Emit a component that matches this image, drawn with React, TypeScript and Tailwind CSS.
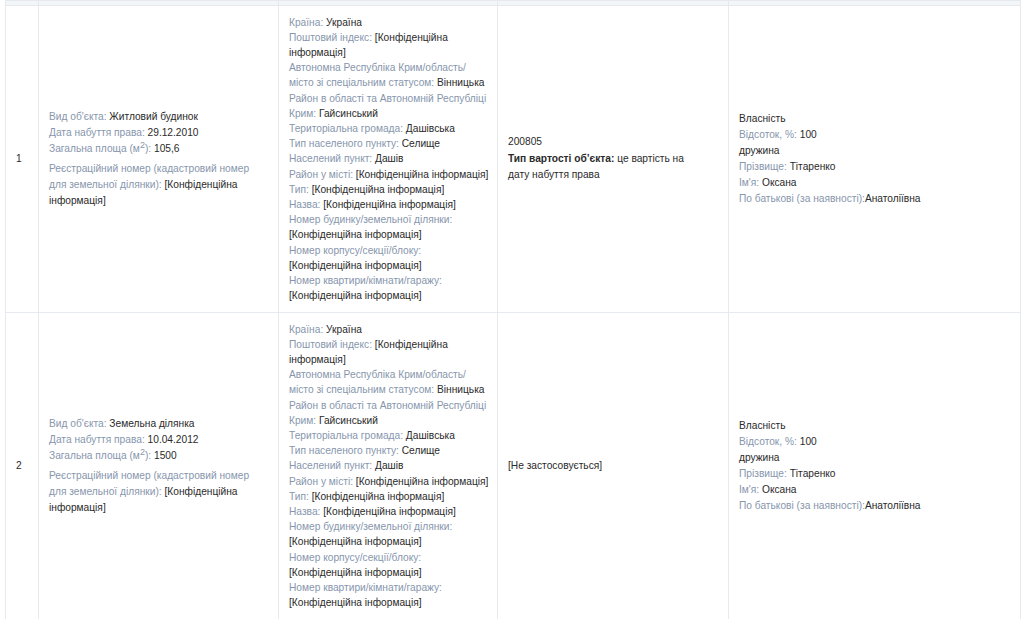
import React from "react";

const L = ({ children }: { children: React.ReactNode }) => (
  <span className="text-[#8796ad]">{children}</span>
);
const V = ({ children }: { children: React.ReactNode }) => (
  <span className="text-[#2a2a2a]">{children}</span>
);

const CONF = "[Конфіденційна інформація]";

function ObjCell({ kind, date, area }: { kind: string; date: string; area: string }) {
  return (
    <div>
      <div className="leading-[16px]">
        <div>
          <L>Вид об'єкта: </L>
          <V>{kind}</V>
        </div>
        <div>
          <L>Дата набуття права: </L>
          <V>{date}</V>
        </div>
        <div>
          <L>
            Загальна площа (м<sup className="text-[9px] leading-none relative -top-[4px] align-baseline">2</sup>):{" "}
          </L>
          <V>{area}</V>
        </div>
      </div>
      <div className="leading-[16px] mt-[4px]">
        <L>Реєстраційний номер (кадастровий номер</L>
        <br />
        <L>для земельної ділянки): </L>
        <V>[Конфіденційна</V>
        <br />
        <V>інформація]</V>
      </div>
    </div>
  );
}

function AddrCell() {
  const lines: React.ReactNode[] = [
    <><L>Країна: </L><V>Україна</V></>,
    <><L>Поштовий індекс: </L><V>[Конфіденційна</V></>,
    <V>інформація]</V>,
    <L>Автономна Республіка Крим/область/</L>,
    <><L>місто зі спеціальним статусом: </L><V>Вінницька</V></>,
    <L>Район в області та Автономній Республіці</L>,
    <><L>Крим: </L><V>Гайсинський</V></>,
    <><L>Територіальна громада: </L><V>Дашівська</V></>,
    <><L>Тип населеного пункту: </L><V>Селище</V></>,
    <><L>Населений пункт: </L><V>Дашів</V></>,
    <><L>Район у місті: </L><V>{CONF}</V></>,
    <><L>Тип: </L><V>{CONF}</V></>,
    <><L>Назва: </L><V>{CONF}</V></>,
    <L>Номер будинку/земельної ділянки:</L>,
    <V>{CONF}</V>,
    <L>Номер корпусу/секції/блоку:</L>,
    <V>{CONF}</V>,
    <L>Номер квартири/кімнати/гаражу:</L>,
    <V>{CONF}</V>,
  ];
  return (
    <div className="leading-[15.2px]">
      {lines.map((l, i) => (
        <div key={i} className="whitespace-nowrap">{l}</div>
      ))}
    </div>
  );
}

function OwnerCell() {
  return (
    <div className="leading-[16px]">
      <div><V>Власність</V></div>
      <div><L>Відсоток, %: </L><V>100</V></div>
      <div><V>дружина</V></div>
      <div><L>Прізвище: </L><V>Тітаренко</V></div>
      <div><L>Ім'я: </L><V>Оксана</V></div>
      <div><L>По батькові (за наявності):</L><V>Анатоліївна</V></div>
    </div>
  );
}

const td = "border border-[#e6eaef] px-[10px] py-[8px] align-middle";

export default function App() {
  return (
    <div
      className="w-[1024px] h-[619px] overflow-hidden bg-white text-[10.2px]"
      style={{ fontFamily: '"Liberation Sans", Arial, sans-serif' }}
    >
      <table className="ml-[5px] w-[1016px] border-collapse table-fixed">
        <colgroup>
          <col className="w-[33px]" />
          <col className="w-[240px]" />
          <col className="w-[219px]" />
          <col className="w-[231px]" />
          <col />
        </colgroup>
        <tbody>
          <tr className="h-[5px] bg-[#f3f6f9]">
            <td className="border border-[#e6eaef] p-0"></td>
            <td className="border border-[#e6eaef] p-0"></td>
            <td className="border border-[#e6eaef] p-0"></td>
            <td className="border border-[#e6eaef] p-0"></td>
            <td className="border border-[#e6eaef] p-0"></td>
          </tr>
          <tr className="h-[307px]">
            <td className={td + " text-[#2a2a2a]"}>1</td>
            <td className={td}>
              <ObjCell kind="Житловий будинок" date="29.12.2010" area="105,6" />
            </td>
            <td className={td}>
              <AddrCell />
            </td>
            <td className={td}>
              <div className="leading-[16.5px] text-[#2a2a2a]">
                <div>200805</div>
                <div>
                  <span className="font-bold">Тип вартості об’єкта:</span> це вартість на
                </div>
                <div>дату набуття права</div>
              </div>
            </td>
            <td className={td}>
              <OwnerCell />
            </td>
          </tr>
          <tr className="h-[307px]">
            <td className={td + " text-[#2a2a2a]"}>2</td>
            <td className={td}>
              <ObjCell kind="Земельна ділянка" date="10.04.2012" area="1500" />
            </td>
            <td className={td}>
              <AddrCell />
            </td>
            <td className={td}>
              <div className="leading-[16.5px] text-[#2a2a2a]">[Не застосовується]</div>
            </td>
            <td className={td}>
              <OwnerCell />
            </td>
          </tr>
        </tbody>
      </table>
    </div>
  );
}
